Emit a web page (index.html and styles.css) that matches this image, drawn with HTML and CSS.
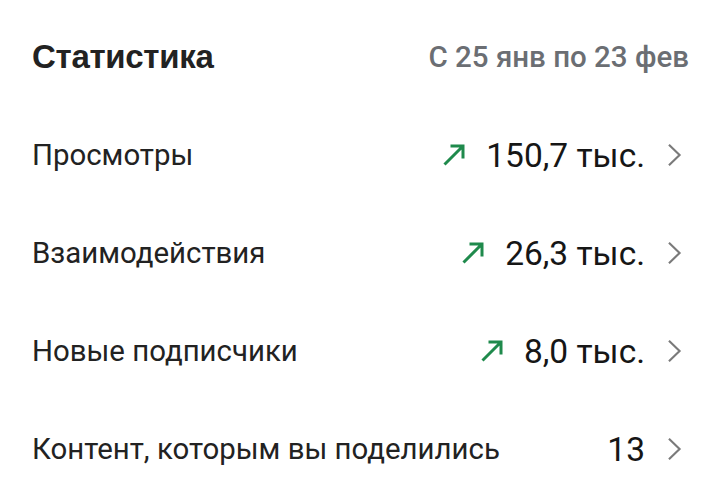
FILE: index.html
```html
<!DOCTYPE html>
<html lang="ru">
<head>
<meta charset="utf-8">
<link rel="stylesheet" href="styles.css">
</head>
<body>
<div class="card">
  <div class="header">
    <div class="title">Статистика</div>
    <div class="date">С 25 янв по 23 фев</div>
  </div>
  <div class="row">
    <div class="label">Просмотры</div>
    <div class="right">
      <svg class="trend" viewBox="0 0 24 24"><path d="M2.5 21.5 L21 3 M8.5 3 H21 V15.5" fill="none" stroke="#1f8a4c" stroke-width="3"/></svg>
      <span class="value">150,7 тыс.</span>
      <svg class="chev" viewBox="0 0 16 26"><path d="M2 2 L13.5 13 L2 24" fill="none" stroke="#7a7a7a" stroke-width="2.3"/></svg>
    </div>
  </div>
  <div class="row">
    <div class="label">Взаимодействия</div>
    <div class="right">
      <svg class="trend" viewBox="0 0 24 24"><path d="M2.5 21.5 L21 3 M8.5 3 H21 V15.5" fill="none" stroke="#1f8a4c" stroke-width="3"/></svg>
      <span class="value">26,3 тыс.</span>
      <svg class="chev" viewBox="0 0 16 26"><path d="M2 2 L13.5 13 L2 24" fill="none" stroke="#7a7a7a" stroke-width="2.3"/></svg>
    </div>
  </div>
  <div class="row">
    <div class="label">Новые подписчики</div>
    <div class="right">
      <svg class="trend" viewBox="0 0 24 24"><path d="M2.5 21.5 L21 3 M8.5 3 H21 V15.5" fill="none" stroke="#1f8a4c" stroke-width="3"/></svg>
      <span class="value">8,0 тыс.</span>
      <svg class="chev" viewBox="0 0 16 26"><path d="M2 2 L13.5 13 L2 24" fill="none" stroke="#7a7a7a" stroke-width="2.3"/></svg>
    </div>
  </div>
  <div class="row">
    <div class="label">Контент, которым вы поделились</div>
    <div class="right">
      <span class="value">13</span>
      <svg class="chev" viewBox="0 0 16 26"><path d="M2 2 L13.5 13 L2 24" fill="none" stroke="#7a7a7a" stroke-width="2.3"/></svg>
    </div>
  </div>
</div>
</body>
</html>
```

FILE: styles.css
```css
html, body {
  margin: 0;
  padding: 0;
  background: #ffffff;
}
.card {
  width: 720px;
  padding: 8px 31px 0 32px;
  box-sizing: border-box;
  font-family: Roboto, "Noto Sans", sans-serif;
}
.header {
  height: 98px;
  display: flex;
  align-items: center;
  justify-content: space-between;
}
.title {
  font-family: "Liberation Sans", Arial, sans-serif;
  font-weight: 700;
  font-size: 33px;
  color: #222222;
  letter-spacing: -0.3px;
}
.date {
  font-weight: 500;
  font-size: 29.5px;
  color: #6b6e73;
}
.row {
  height: 98px;
  display: flex;
  align-items: center;
  justify-content: space-between;
}
.label {
  font-size: 29.4px;
  color: #222222;
}
.right {
  display: flex;
  align-items: center;
}
.trend {
  width: 24px;
  height: 24px;
  margin-right: 20px;
}
.value {
  font-size: 33.5px;
  color: #161616;
}
.chev {
  width: 15px;
  height: 24px;
  margin-left: 22px;
  margin-right: 7px;
}
```
